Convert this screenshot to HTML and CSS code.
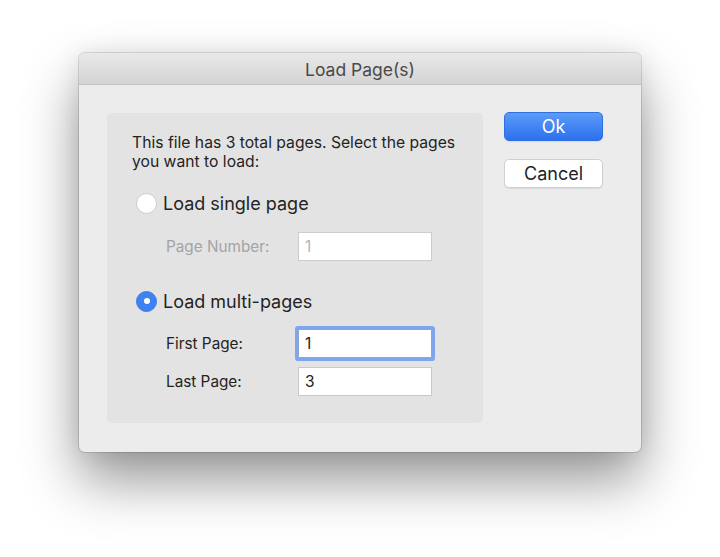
FILE: index.html
```html
<!DOCTYPE html>
<html lang="en">
<head>
  <meta charset="UTF-8" />
  <meta name="viewport" content="width=device-width, initial-scale=1.0"/>
  <title>Load Page(s)</title>
  <link rel="stylesheet" href="styles.css">
</head>
<body>
  <div class="window">
    <div class="title-bar">Load Page(s)</div>

    <div class="content">
      <div class="group-box">
        <p class="intro">This file has 3 total pages. Select the pages you want to load:</p>

        <label class="radio-row">
          <input type="radio" name="mode" value="single">
          <span class="radio"></span>
          <span class="radio-label">Load single page</span>
        </label>

        <div class="field-row disabled single-row">
          <label for="page-number">Page Number:</label>
          <input type="text" id="page-number" value="1" disabled>
        </div>

        <label class="radio-row multi">
          <input type="radio" name="mode" value="multi" checked>
          <span class="radio"></span>
          <span class="radio-label">Load multi-pages</span>
        </label>

        <div class="field-row first-row">
          <label for="first-page">First Page:</label>
          <input type="text" id="first-page" value="1" class="focused">
        </div>

        <div class="field-row">
          <label for="last-page">Last Page:</label>
          <input type="text" id="last-page" value="3">
        </div>
      </div>

      <div class="buttons">
        <button class="btn primary">Ok</button>
        <button class="btn">Cancel</button>
      </div>
    </div>
  </div>
</body>
</html>
```

FILE: styles.css
```css
:root {
  --window-bg: #ececec;
  --group-bg: #e3e3e3;
  --text: #232323;
  --muted: #a3a3a3;
  --blue: #3d82f2;
}

body {
  margin: 0;
  background: #ffffff;
  font-family: Inter, "Liberation Sans", sans-serif;
  color: var(--text);
  height: 557px;
  overflow: hidden;
}

.window {
  width: 562px;
  height: 399px;
  margin: 53px auto 0;
  background: var(--window-bg);
  border-radius: 6px;
  box-shadow:
    0 0 0 1px rgba(0, 0, 0, 0.12),
    0 0 22px rgba(0, 0, 0, 0.08),
    0 28px 55px rgba(0, 0, 0, 0.42);
  overflow: hidden;
}

.title-bar {
  height: 31px;
  line-height: 33px;
  text-align: center;
  font-size: 17.5px;
  color: #4a4a4a;
  background: linear-gradient(#e9e9e9, #d4d4d4);
  border-bottom: 1px solid #c3c3c3;
}

.content {
  display: flex;
  gap: 21px;
  padding: 28px 38px 29px 28px;
}

.group-box {
  width: 376px;
  height: 310px;
  box-sizing: border-box;
  background: var(--group-bg);
  border-radius: 5px;
  padding: 20px 20px 0 25px;
}

.intro {
  margin: 0 0 20px;
  font-size: 15.7px;
  line-height: 19px;
}

.radio-row {
  display: flex;
  align-items: center;
  margin-left: 4px;
  height: 24px;
}

.radio-row input {
  display: none;
}

.radio {
  width: 21px;
  height: 21px;
  box-sizing: border-box;
  border-radius: 50%;
  background: #ffffff;
  border: 1px solid #cbcbcb;
  margin-right: 6px;
  flex-shrink: 0;
  position: relative;
}

.radio-row input:checked + .radio {
  background: var(--blue);
  border-color: #3b7be6;
}

.radio-row input:checked + .radio::after {
  content: "";
  position: absolute;
  top: 6.5px;
  left: 6.5px;
  width: 6px;
  height: 6px;
  border-radius: 50%;
  background: #ffffff;
}

.radio-label {
  font-size: 18px;
}

.multi {
  margin-top: 28px;
}

.field-row {
  display: flex;
  align-items: center;
  padding-left: 34px;
  margin-top: 9px;
}

.single-row {
  margin-top: 17px;
}

.first-row {
  margin-top: 16px;
}

.field-row label {
  width: 132px;
  font-size: 15.3px;
}

.field-row.disabled label {
  color: var(--muted);
}

.field-row input {
  width: 134px;
  height: 29px;
  box-sizing: border-box;
  border: 1px solid #c9c9c9;
  background: #ffffff;
  padding: 0 6px;
  font-family: inherit;
  font-size: 15.5px;
  color: var(--text);
  outline: none;
}

.field-row input:disabled {
  color: #b5b5b5;
  border-color: #cdcdcd;
  background: #ffffff;
}

.field-row input.focused {
  border-color: #8aa6d6;
  box-shadow: 0 0 0 3px #7fa6ec;
  border-radius: 1px;
}

.buttons {
  display: flex;
  flex-direction: column;
  gap: 18px;
  margin-top: -1px;
}

.btn {
  width: 99px;
  height: 29px;
  border-radius: 5px;
  border: 1px solid #cfcfcf;
  background: #ffffff;
  font-family: inherit;
  font-size: 18px;
  color: #1e1e1e;
  padding: 0;
  box-shadow: 0 1px 1px rgba(0, 0, 0, 0.08);
}

.btn.primary {
  background: linear-gradient(#5b9bf8, #2d70ee);
  border-color: #2f6fe0;
  color: #ffffff;
}
```
